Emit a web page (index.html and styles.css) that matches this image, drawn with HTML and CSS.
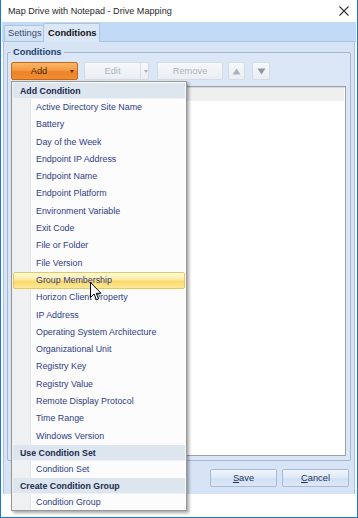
FILE: index.html
```html
<!DOCTYPE html>
<html>
<head>
<meta charset="utf-8">
<link rel="stylesheet" href="styles.css">
</head>
<body>
<div class="window">
  <div class="titlebar">
    <span class="title">Map Drive with Notepad - Drive Mapping</span>
    <svg class="close" width="10" height="10" viewBox="0 0 10 10"><path d="M0.5 0.5 L9.5 9.5 M9.5 0.5 L0.5 9.5" stroke="#333" stroke-width="1.1" fill="none"/></svg>
  </div>
  <div class="tabstrip">
    <div class="tab">Settings</div>
    <div class="tab active">Conditions</div>
  </div>
  <div class="panel">
    <div class="group">
      <div class="legend">Conditions</div>
      <div class="toolbar">
        <div class="btn add"><span class="lbl">Add</span><span class="caret dark"></span></div>
        <div class="btn dis edit"><span class="lbl">Edit</span><span class="sep"></span><span class="caret"></span></div>
        <div class="btn dis remove"><span class="lbl">Remove</span></div>
        <div class="btn dis arrow"><svg width="9" height="7" viewBox="0 0 9 7"><path d="M4.5 0.5 L8.5 6.5 L0.5 6.5 Z" fill="#a9b1bc"/></svg></div>
        <div class="btn dis arrow down"><svg width="9" height="7" viewBox="0 0 9 7"><path d="M0.5 0.5 L8.5 0.5 L4.5 6.5 Z" fill="#8e98a5"/></svg></div>
      </div>
      <div class="list"><div class="list-head"></div></div>
    </div>
    <div class="footer">
      <div class="fbtn"><span class="ul">S</span>ave</div>
      <div class="fbtn"><span class="ul">C</span>ancel</div>
    </div>
  </div>
  <div class="menu">
    <div class="mhead">Add Condition</div>
    <div class="mitem">Active Directory Site Name</div>
    <div class="mitem">Battery</div>
    <div class="mitem">Day of the Week</div>
    <div class="mitem">Endpoint IP Address</div>
    <div class="mitem">Endpoint Name</div>
    <div class="mitem">Endpoint Platform</div>
    <div class="mitem">Environment Variable</div>
    <div class="mitem">Exit Code</div>
    <div class="mitem">File or Folder</div>
    <div class="mitem">File Version</div>
    <div class="mitem hot">Group Membership</div>
    <div class="mitem">Horizon Client Property</div>
    <div class="mitem">IP Address</div>
    <div class="mitem">Operating System Architecture</div>
    <div class="mitem">Organizational Unit</div>
    <div class="mitem">Registry Key</div>
    <div class="mitem">Registry Value</div>
    <div class="mitem">Remote Display Protocol</div>
    <div class="mitem">Time Range</div>
    <div class="mitem">Windows Version</div>
    <div class="mhead">Use Condition Set</div>
    <div class="mitem">Condition Set</div>
    <div class="mhead">Create Condition Group</div>
    <div class="mitem">Condition Group</div>
  </div>
  <svg class="cursor" width="12" height="19" viewBox="0 0 12 19"><path d="M0.5 0.5 L0.5 15.5 L4 12 L6.5 17.8 L8.6 16.9 L6.2 11.3 L11 11.3 Z" fill="#fff" stroke="#000" stroke-width="1" stroke-linejoin="round"/></svg>
</div>
</body>
</html>
```
FILE: styles.css
```css
* { box-sizing: border-box; }
html, body { margin: 0; padding: 0; }
body { width: 358px; height: 518px; overflow: hidden; background: #fff; font-family: "Liberation Sans", Arial, sans-serif; font-size: 9px; white-space: nowrap; }
.window { position: relative; width: 358px; height: 518px; border: 1px solid #1b78d8; border-top: none; background: #fff; display: flex; flex-direction: column; }
.titlebar { height: 22px; display: flex; align-items: center; justify-content: space-between; padding: 0 8px 1px 7px; flex: none; }
.title { color: #2a2a2a; font-size: 9.1px; }
.tabstrip { height: 20px; flex: none; background: #c3daf6; border-bottom: 1px solid #a9c3e3; display: flex; align-items: flex-end; padding-left: 2px; margin: 0 1px; }
.tab { height: 16px; width: 40px; border: 1px solid #a9c3e3; border-bottom: none; border-radius: 2px 2px 0 0; background: linear-gradient(#dde9f8, #cfe0f5); color: #3a4a66; padding: 0 0 0 3px; font-size: 9.3px; line-height: 15px; }
.tab.active { width: 57px; height: 19px; background: #dbe7f7; color: #111; font-weight: bold; margin-bottom: -1px; margin-left: -1px; line-height: 18px; padding: 0 0 0 4px; }
.panel { flex: none; height: 452px; margin: 0 2px; border-left: 1px solid #a9c3e3; border-right: 1px solid #a9c3e3; background: #d6e4f6; display: flex; flex-direction: column; padding: 10px 3px 0 3px; }
.group { position: relative; flex: none; height: 409px; border: 1px solid #a6b8d0; border-radius: 2px; background: #dbe6f6; padding: 9px 4px 4px 3px; display: flex; flex-direction: column; }
.legend { position: absolute; top: -8px; left: 3px; padding: 0 2px; background: #d6e4f6; font-weight: bold; color: #22406e; font-size: 9.3px; line-height: 14px; }
.toolbar { height: 18px; display: flex; flex: none; }
.btn { height: 18px; border: 1px solid #d4dbe3; border-radius: 2px; background: linear-gradient(#f6f8fa, #eaeef2); color: #acb4bf; display: flex; align-items: center; position: relative; font-size: 9.3px; }
.btn.add { width: 67px; border-color: #c4681c; background: linear-gradient(#fcb86a 0%, #f59b42 45%, #ec8428 55%, #f08d34 100%); color: #4a2d10; }
.btn.add .lbl { width: 54px; text-align: center; }
.caret { width: 0; height: 0; border-left: 2.5px solid transparent; border-right: 2.5px solid transparent; border-top: 3px solid #a6aeb8; margin-left: 4px; }
.caret.dark { border-top-color: #5a3410; }
.btn.edit { width: 65px; margin-left: 6px; }
.btn.edit .lbl { width: 55px; text-align: center; }
.btn.edit .sep { width: 1px; height: 16px; background: #d6dce3; }
.btn.edit .caret { margin-left: 3px; }
.btn.remove { width: 66px; margin-left: 8px; justify-content: center; }
.btn.arrow { width: 17px; margin-left: 5px; justify-content: center; }
.btn.arrow.down { width: 18px; margin-left: 7px; }
.list { margin-top: 6px; flex: 1; background: #fff; border: 1px solid #9ea3a8; box-shadow: inset 1px 1px 0 #d8d8d8; }
.list-head { height: 13px; background: #efefef; margin: 1px 1px 0 1px; }
.footer { flex: none; display: flex; justify-content: flex-end; padding: 8px 2px 0 0; gap: 5px; }
.fbtn { width: 67px; height: 18px; border: 1px solid #a6bbd8; border-radius: 2px; background: linear-gradient(#f1f5fb, #dde8f7 50%, #d2e0f4 52%, #dde8f7); color: #1e3358; font-size: 9.3px; text-align: center; line-height: 16px; }
.ul { text-decoration: underline; }
.menu { position: absolute; left: 10px; top: 81px; width: 176px; height: 430px; background: #fcfcfc; border: 1px solid #979797; box-shadow: 2px 2px 3px rgba(0,0,0,0.35); padding: 1px; background-image: linear-gradient(to right, #eef0f2 0, #eef0f2 18px, #e0e2e4 18px, #e0e2e4 19px, #fff 19px, #fff 20px, transparent 20px); }
.mhead { height: 16px; line-height: 16px; background: #dde5ef; border-bottom: 1px solid #eef2f7; padding-left: 7px; font-weight: bold; color: #1c2a4c; font-size: 8.8px; }
.mitem { height: 17.3px; line-height: 17.3px; padding-left: 23px; color: #2f3d86; font-size: 8.9px; position: relative; }
.mitem.hot { background: linear-gradient(#fffbe0, #fdeaa0 45%, #fbd965 55%, #fce79a); border: 1px solid #e7c859; border-radius: 2px; line-height: 15.3px; padding-left: 22px; }
.cursor { position: absolute; left: 89px; top: 282px; }
```
